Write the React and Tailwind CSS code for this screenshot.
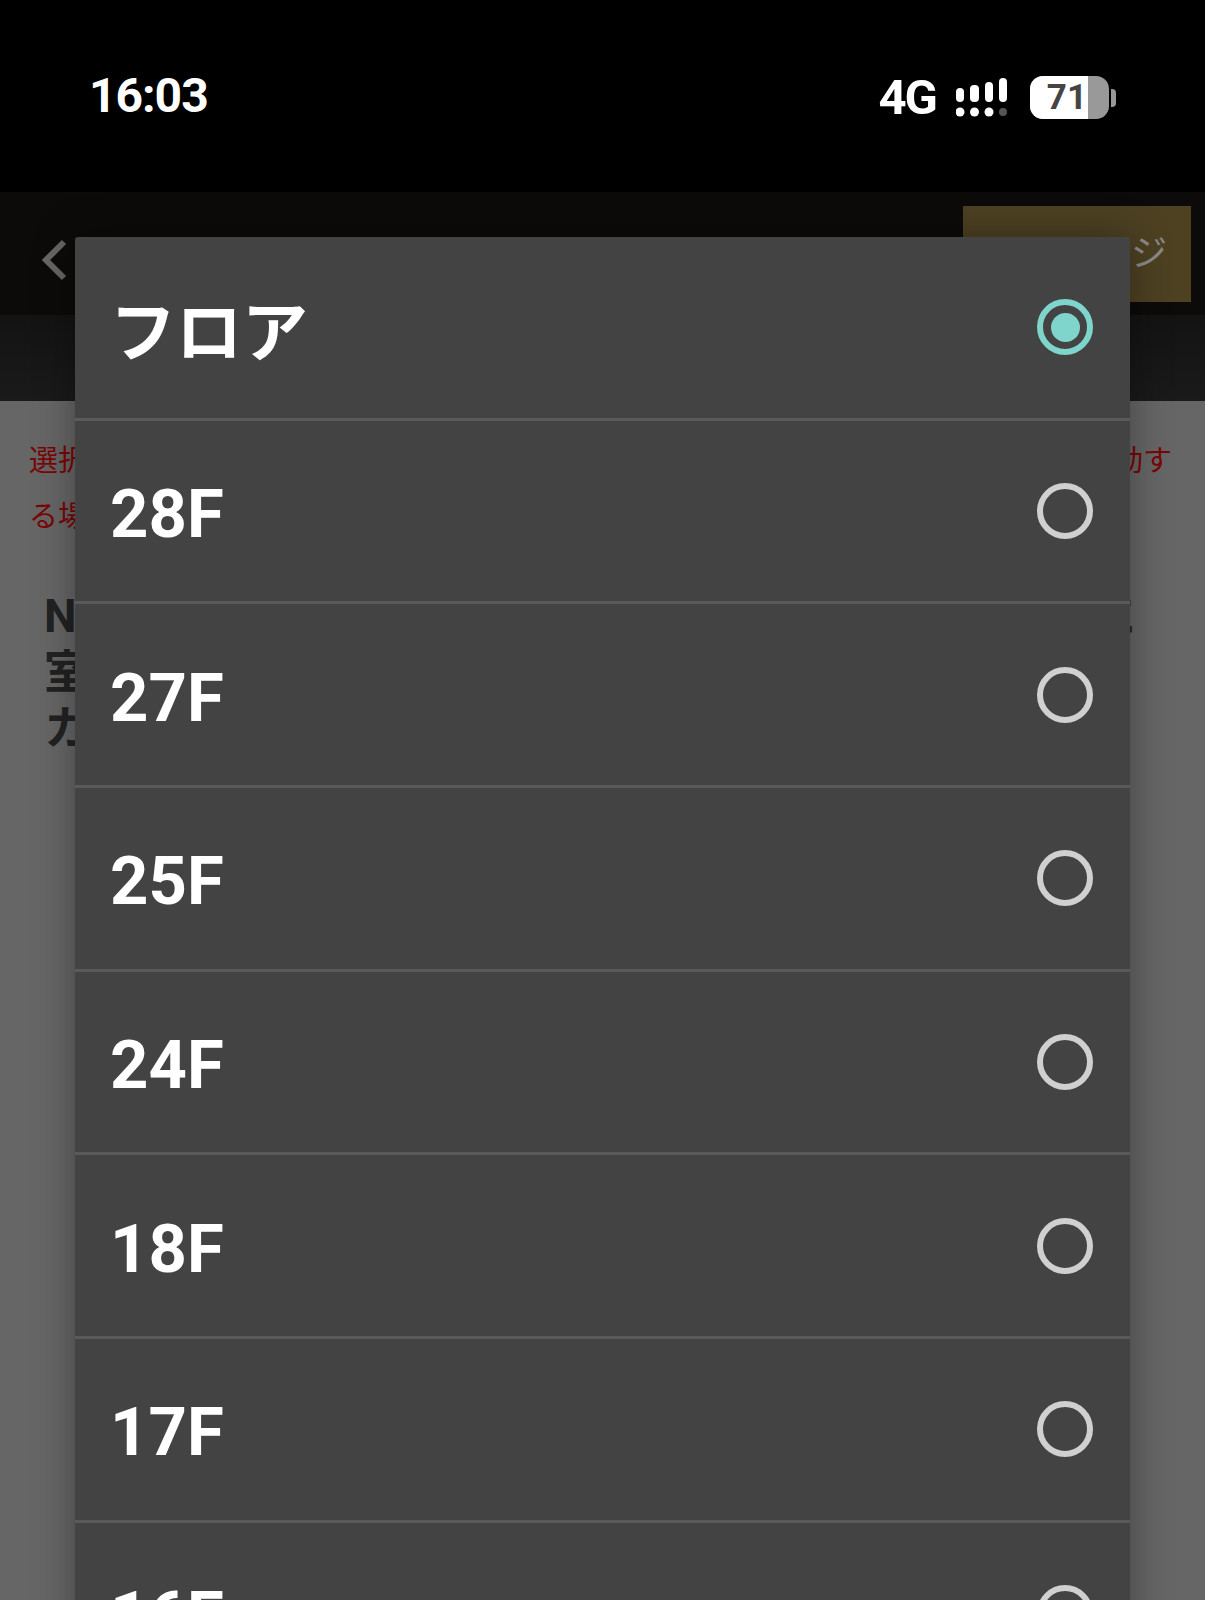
import { useState } from "react";

const floors = ["フロア", "28F", "27F", "25F", "24F", "18F", "17F", "16F"];

function StatusIcons() {
  return (
    <div className="flex items-center">
      <span className="text-[49px] font-bold leading-[43px] tracking-[-2px] text-white">4G</span>
      <svg className="ml-[20px]" width="52" height="39" viewBox="0 0 52 39" fill="#fff">
        <rect x="0" y="10" width="8" height="14" rx="4" />
        <rect x="14" y="7" width="9" height="17" rx="4" />
        <rect x="29" y="4" width="8" height="20" rx="4" />
        <rect x="43" y="0" width="8" height="24" rx="4" />
        <circle cx="4" cy="34" r="4.5" />
        <circle cx="18.5" cy="34" r="4.5" />
        <circle cx="33" cy="34" r="4.5" />
        <circle cx="47" cy="34" r="4" fill="#555" />
      </svg>
      <div className="ml-[22px] flex items-center">
        <div className="flex h-[43px] w-[79px] items-center overflow-hidden rounded-[13px] bg-[#999]">
          <div className="flex h-full w-[58px] items-center justify-end bg-white pr-[1px]">
            <span className="text-[35px] font-bold leading-none text-[#444]">71</span>
          </div>
        </div>
        <div className="ml-[2px] h-[18px] w-[5px] rounded-r-sm bg-[#999]" />
      </div>
    </div>
  );
}

export default function App() {
  const [selected, setSelected] = useState(0);

  return (
    <div className="relative h-[1600px] w-full overflow-hidden bg-[#666] font-['Roboto','Noto_Sans_CJK_JP',sans-serif]">
      {/* status bar */}
      <div className="flex h-[192px] items-start justify-between bg-black pl-[89px] pr-[89px] pt-[76px]">
        <span className="text-[48px] font-bold leading-[40px] tracking-[-1px] text-white">16:03</span>
        <StatusIcons />
      </div>

      {/* header */}
      <div className="flex h-[123px] items-start justify-between bg-[#0c0b0a] pl-[40px] pr-[14px] pt-[14px]">
        <svg className="mt-[33px]" width="30" height="42" viewBox="0 0 30 42" fill="none" stroke="#666" strokeWidth="6">
          <path d="M24 3 L6 21 L24 39" />
        </svg>
        <div className="flex h-[96px] w-[228px] items-center justify-end bg-[#4d4122] pr-[24px]">
          <span className="text-[36px] text-[#8a8a88]">ジ</span>
        </div>
      </div>
      <div className="h-[86px] bg-gradient-to-b from-[#131313] to-[#1a1a1a]" />

      {/* page behind the dialog */}
      <div className="px-[29px] pt-[32px]">
        <div className="flex justify-between pr-[4px] text-[29px] leading-[56px] text-[#7a0606]">
          <span>選択</span>
          <span>動す</span>
        </div>
        <div className="text-[29px] leading-[56px] text-[#7a0606]">る場</div>
        <div className="mt-[43px] pl-[15px] text-[46px] font-bold leading-[56px] text-[#222]">
          <div className="flex justify-between pr-[40px]">
            <span>N</span>
            <span>に</span>
          </div>
          <div>室</div>
          <div>カ</div>
        </div>
      </div>

      {/* floor picker */}
      <div className="absolute left-[75px] right-[75px] top-[237px] overflow-hidden rounded-t-[3px] shadow-[0_0_40px_rgba(0,0,0,0.35)]">
        {floors.map((floor, i) => (
          <div
            key={floor}
            onClick={() => setSelected(i)}
            className="flex h-[183.67px] items-center justify-between border-b-[3px] border-[#5a5a5a] bg-[#434343] pl-[35px] pr-[37px]"
          >
            <span className={i === 0 ? "pt-[14px] text-[66px] font-bold leading-none text-white" : "pt-[7px] text-[67px] font-bold leading-none text-white"}>
              {floor}
            </span>
            <span
              className={
                i === selected
                  ? "flex h-[56px] w-[56px] items-center justify-center rounded-full border-[6px] border-[#7fd4cb]"
                  : "h-[56px] w-[56px] rounded-full border-[6px] border-[#d0d0d0]"
              }
            >
              {i === selected && <span className="h-[29px] w-[29px] rounded-full bg-[#7fd4cb]" />}
            </span>
          </div>
        ))}
      </div>
    </div>
  );
}
